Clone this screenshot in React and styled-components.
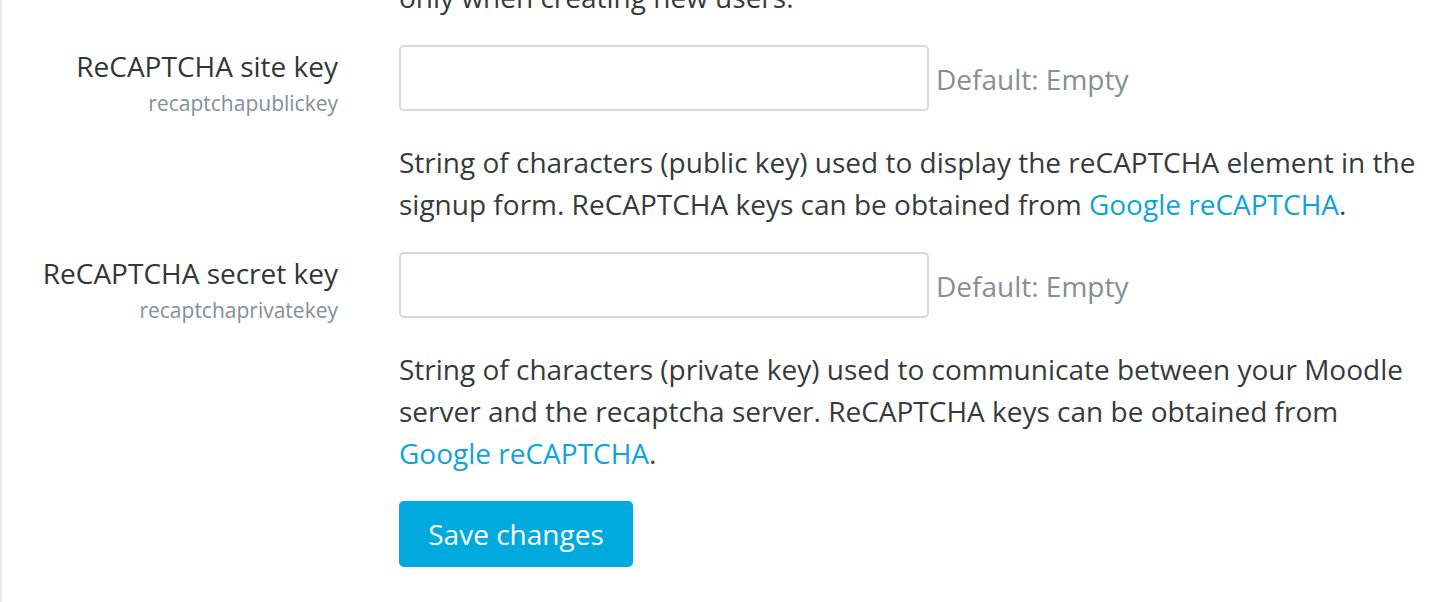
import styled, { createGlobalStyle } from "styled-components";

const GlobalStyle = createGlobalStyle`
  html, body {
    margin: 0;
    padding: 0;
    background: #fff;
    overflow: hidden;
  }
  body {
    font-family: "Open Sans", "Liberation Sans", sans-serif;
    color: #373a3c;
  }
`;

const Page = styled.div`
  height: 602px;
  border-left: 2px solid #e9e9e9;
  display: flex;
  flex-direction: column;
  gap: 27px;
  overflow: hidden;
`;

const Setting = styled.div`
  display: grid;
  grid-template-columns: 336px 1fr;
  column-gap: 61px;
  align-items: start;
`;

const LabelCol = styled.div`
  display: flex;
  flex-direction: column;
  align-items: flex-end;
  text-align: right;
`;

const Label = styled.div`
  font-size: 28px;
  line-height: 42px;
  color: #333638;
`;

const Name = styled.div`
  font-size: 21px;
  line-height: 32px;
  color: #868e96;
`;

const Content = styled.div`
  width: 1030px;
`;

const InputLine = styled.div`
  display: flex;
  align-items: center;
  gap: 7px;
`;

const Input = styled.input`
  box-sizing: border-box;
  width: 530px;
  height: 66px;
  border: 2px solid #d9d9d9;
  border-radius: 5px;
  background: #fff;
  font: inherit;
  font-size: 28px;
  padding: 12px 18px;
  outline: none;
`;

const DefaultInfo = styled.span`
  font-size: 28px;
  line-height: 42px;
  color: #868e96;
  margin-top: 2px;
`;

const Description = styled.div`
  font-size: 28px;
  line-height: 42px;
  color: #373a3c;
  margin-top: ${(p) => p.$top || 0}px;
`;

const Link = styled.a`
  color: #0ea4da;
  text-decoration: none;
`;

const Button = styled.button`
  width: 234px;
  height: 66px;
  border: none;
  border-radius: 5px;
  background: #00aade;
  color: #fff;
  font-family: "Open Sans", "Liberation Sans", sans-serif;
  font-size: 28px;
  padding: 0;
  cursor: pointer;
`;

const settings = [
  {
    label: "ReCAPTCHA site key",
    name: "recaptchapublickey",
    text: "String of characters (public key) used to display the reCAPTCHA element in the signup form. ReCAPTCHA keys can be obtained from ",
  },
  {
    label: "ReCAPTCHA secret key",
    name: "recaptchaprivatekey",
    text: "String of characters (private key) used to communicate between your Moodle server and the recaptcha server. ReCAPTCHA keys can be obtained from ",
  },
];

export default function App() {
  return (
    <>
      <GlobalStyle />
      <Page>
        <Setting style={{ marginTop: -24 }}>
          <LabelCol />
          <Content>
            <Description>only when creating new users.</Description>
          </Content>
        </Setting>
        {settings.map((s) => (
          <Setting key={s.name}>
            <LabelCol>
              <Label>{s.label}</Label>
              <Name>{s.name}</Name>
            </LabelCol>
            <Content>
              <InputLine>
                <Input type="text" />
                <DefaultInfo>Default: Empty</DefaultInfo>
              </InputLine>
              <Description $top={30}>
                {s.text}
                <Link href="#">Google reCAPTCHA</Link>.
              </Description>
            </Content>
          </Setting>
        ))}
        <Setting>
          <LabelCol />
          <Content>
            <Button>Save changes</Button>
          </Content>
        </Setting>
      </Page>
    </>
  );
}
